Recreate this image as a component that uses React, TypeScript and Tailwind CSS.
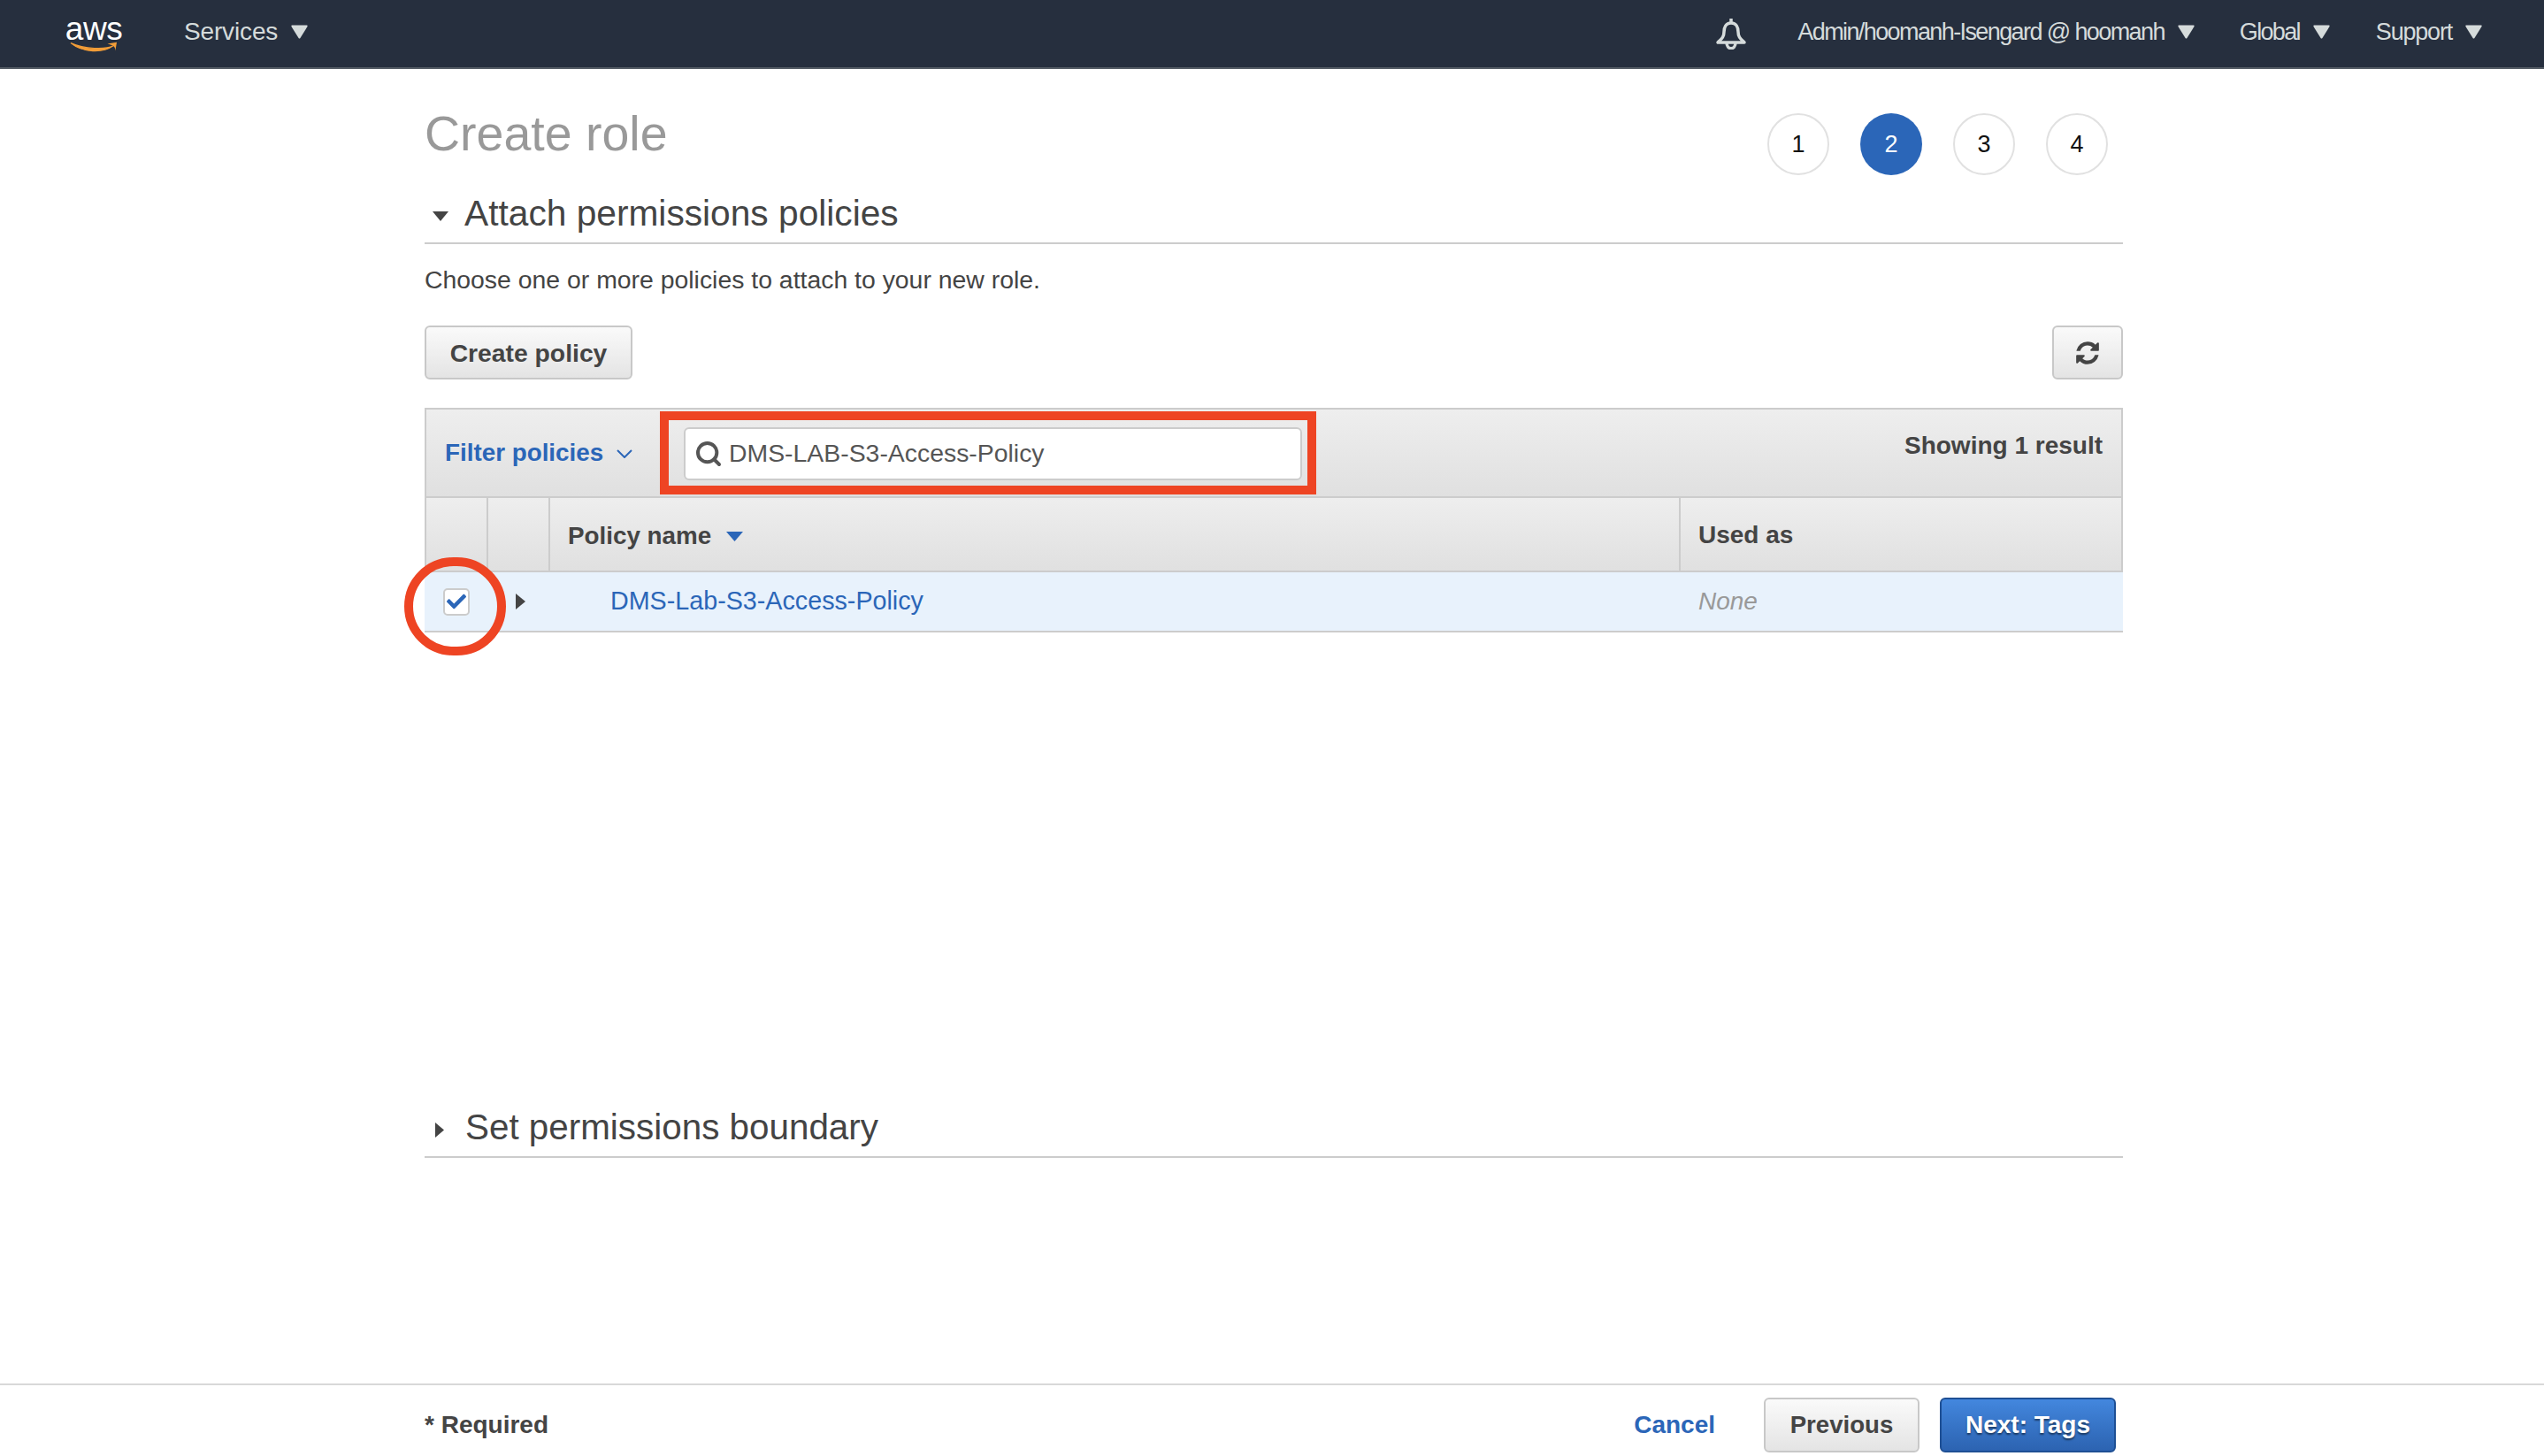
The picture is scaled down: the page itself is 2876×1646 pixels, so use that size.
import { FaCheck } from "react-icons/fa";
import { Search } from "lucide-react";

const Tri = ({ className }: { className: string }) => (
  <svg viewBox="0 0 20 16" preserveAspectRatio="none" className={className}>
    <path d="M1 0.5 H19 Q20 0.5 19.5 2 L11 15 Q10 16 9 15 L0.5 2 Q0 0.5 1 0.5 Z" fill="currentColor" />
  </svg>
);

const Down = ({ className }: { className: string }) => (
  <svg viewBox="0 0 20 12" preserveAspectRatio="none" className={className}>
    <path d="M0 0 H20 L10 12 Z" fill="currentColor" />
  </svg>
);

const Right = ({ className }: { className: string }) => (
  <svg viewBox="0 0 10 18" preserveAspectRatio="none" className={className}>
    <path d="M0 0 L10 9 L0 18 Z" fill="currentColor" />
  </svg>
);

const RefreshIcon = () => (
  <svg viewBox="0 0 1792 1792" className="w-[30px] h-[30px] text-[#444]">
    <path
      fill="currentColor"
      d="M1639 1056q0 5-1 7-64 268-268 434.5t-478 166.5q-146 0-282.5-55t-243.5-157l-129 129q-19 19-45 19t-45-19-19-45v-448q0-26 19-45t45-19h448q26 0 45 19t19 45-19 45l-137 137q71 66 161 102t187 36q134 0 250-65t186-179q11-17 53-117 8-23 30-23h192q13 0 22.5 9.5t9.5 22.5zm25-800v448q0 26-19 45t-45 19h-448q-26 0-45-19t-19-45 19-45l138-138q-148-137-349-137-134 0-250 65t-186 179q-11 17-53 117-8 23-30 23h-199q-13 0-22.5-9.5t-9.5-22.5v-7q65-268 270-434.5t480-166.5q146 0 284 55.5t245 156.5l130-129q19-19 45-19t45 19 19 45z"
    />
  </svg>
);

const NavItem = ({ label, className, textClass }: { label: string; className: string; textClass: string }) => (
  <div className={`flex items-center gap-[15px] ${className}`}>
    <span className={`text-[#d5dbdb] leading-none ${textClass}`}>{label}</span>
    <Tri className="w-[19px] h-[16px] text-[#d5dbdb]" />
  </div>
);

const Steps = () => (
  <div className="flex gap-[35px] mr-[17px]">
    {[1, 2, 3, 4].map((n) => (
      <div
        key={n}
        className={
          n === 2
            ? "w-[70px] h-[70px] rounded-full bg-[#2b66b8] text-white flex items-center justify-center text-[27px]"
            : "w-[70px] h-[70px] rounded-full border-2 border-[#e1e1e1] text-[#111] flex items-center justify-center text-[27px]"
        }
      >
        {n}
      </div>
    ))}
  </div>
);

const btn = "h-[61px] rounded-[6px] border-2 border-[#c8c8c8] bg-gradient-to-b from-[#fafafa] to-[#e4e4e4] text-[#444] font-bold flex items-center justify-center";

export default function App() {
  return (
    <div className="h-[1646px] w-[2876px] overflow-hidden bg-white flex flex-col font-['Liberation_Sans',Arial,sans-serif] text-[#444]">
      <header className="h-[78px] shrink-0 bg-[#262f3e] border-b-2 border-[#545b64] flex items-center">
        <div className="w-[73px]" />
        <div className="w-[66px] h-[44px] flex flex-col items-center">
          <span className="text-[37px] leading-[34px] tracking-[-0.5px] text-white">aws</span>
          <svg viewBox="0 0 66 16" className="w-[66px] h-[16px] -mt-[3px]">
            <path d="M1 2 C18 16 46 16 60 6 C50 11 20 11 1 2 Z" fill="#f29d38" stroke="#f29d38" strokeWidth="1.5" />
            <path d="M52 3 L65 1 L63 13 C63 8 62 5 52 3 Z" fill="#f29d38" />
          </svg>
        </div>
        <NavItem label="Services" className="ml-[69px] -mt-[4px]" textClass="text-[28px] tracking-[-0.15px]" />
        <div className="flex-1" />
        <svg viewBox="0 0 36 36" className="w-[36px] h-[36px] text-[#d5dbdb] -mt-[1px]" fill="none" stroke="currentColor" strokeWidth="3.5">
          <path d="M18 1 V6 M18 6 C12 6 10 11 10 16 C10 22 7 24 3 28 H33 C29 24 26 22 26 16 C26 11 24 6 18 6 Z" strokeLinejoin="round" />
          <path d="M13 28 C13 37 23 37 23 28" />
        </svg>
        <NavItem label="Admin/hoomanh-Isengard @ hoomanh" className="ml-[57px] -mt-[4px]" textClass="text-[27px] tracking-[-1.6px]" />
        <NavItem label="Global" className="ml-[51px] -mt-[4px]" textClass="text-[27px] tracking-[-1.67px]" />
        <NavItem label="Support" className="ml-[52px] mr-[70px] -mt-[4px]" textClass="text-[27px] tracking-[-1.2px]" />
      </header>

      <main className="flex-1 w-[1920px] ml-[480px]">
        <div className="flex justify-between pt-[50px] h-[120px]">
          <h1 className="text-[55.5px] leading-[54px] text-[#999] font-normal -mt-[4px]">Create role</h1>
          <Steps />
        </div>
        <div className="h-[78px] border-b-2 border-[#ccc] flex items-center pt-[11px]">
          <Down className="w-[18px] h-[11px] ml-[9px] mr-[18px] mt-[6px] text-[#444]" />
          <h2 className="text-[40.7px] leading-none font-normal">Attach permissions policies</h2>
        </div>
        <p className="text-[28.4px] leading-none mt-[26px] text-[#444]">Choose one or more policies to attach to your new role.</p>
        <div className="flex justify-between mt-[38px]">
          <button className={`${btn} w-[235px] text-[28.3px] pt-[1px]`}>Create policy</button>
          <button className={`${btn} w-[80px]`}>
            <RefreshIcon />
          </button>
        </div>

        <div className="relative mt-[32px]">
          <div className="h-[102px] border-2 border-[#ccc] bg-gradient-to-b from-[#eeeeee] to-[#e0e0e0] flex relative">
            <div className="flex items-center gap-[15px] pl-[21px] h-[96px]">
              <span className="text-[27.8px] font-bold text-[#2b66b8]">Filter policies</span>
              <svg viewBox="0 0 18 10" className="w-[18px] h-[10px] mt-[4px] text-[#2b66b8]" fill="none" stroke="currentColor" strokeWidth="2">
                <path d="M1 1 L9 9 L17 1" />
              </svg>
            </div>
            <div className="absolute left-[291px] top-[20px] w-[699px] h-[60px] rounded-[6px] border-2 border-[#ccc] bg-white flex items-center pl-[10px] gap-[7px]">
              <Search className="w-[32px] h-[32px] text-[#555]" strokeWidth={3} />
              <span className="text-[28.4px] text-[#555] leading-none -mt-[2px]">DMS-LAB-S3-Access-Policy</span>
            </div>
            <div className="absolute left-[264px] top-[2px] w-[742px] h-[94px] border-[10px] border-[#ee4423]" />
            <div className="ml-auto pr-[21px] pt-[27px] text-[28px] font-bold leading-none">Showing 1 result</div>
          </div>
          <div className="grid grid-cols-[70px_70px_1278px_1fr] h-[84px] bg-gradient-to-b from-[#eeeeee] to-[#e0e0e0] border-x-2 border-b-2 border-[#ccc]">
            <div className="border-r-2 border-[#ccc]" />
            <div className="border-r-2 border-[#ccc]" />
            <div className="border-r-2 border-[#ccc] flex items-center pl-[20px] gap-[17px] pt-[2px]">
              <span className="text-[27.8px] font-bold">Policy name</span>
              <Down className="w-[19px] h-[11px] text-[#2b66b8] mt-[3px]" />
            </div>
            <div className="flex items-center pl-[20px] text-[28px] font-bold pt-[2px]">Used as</div>
          </div>
          <div className="grid grid-cols-[71px_70px_1278px_1fr] h-[68px] bg-[#e8f2fc] border-b-2 border-[#ccc] relative">
            <div className="flex items-center justify-center">
              <div className="w-[30px] h-[31px] rounded-[5px] border-2 border-[#ccc] bg-white flex items-center justify-center">
                <FaCheck className="w-[24px] h-[22px] text-[#2b66b8]" />
              </div>
            </div>
            <div className="flex items-center pl-[32px]">
              <Right className="w-[11px] h-[18px] text-[#444]" />
            </div>
            <div className="flex items-center pl-[69px] pb-[2px] text-[28.7px] text-[#2b66b8]">DMS-Lab-S3-Access-Policy</div>
            <div className="flex items-center pl-[21px] text-[28px] italic text-[#999]">None</div>
          </div>
          <div className="absolute -left-[23px] top-[169px] w-[115px] h-[111px] rounded-full border-[10px] border-[#ee4423]" />
        </div>

        <div className="h-[78px] mt-[516px] border-b-2 border-[#ccc] flex items-center pt-[10px]">
          <Right className="w-[10px] h-[17px] ml-[12px] mr-[24px] mt-[6px] text-[#444]" />
          <h2 className="text-[40.4px] leading-none font-normal">Set permissions boundary</h2>
        </div>
      </main>

      <footer className="h-[82px] shrink-0 border-t-2 border-[#d8d8d8] flex items-center pl-[480px] pr-[484px] pt-[10px]">
        <span className="text-[28px] font-bold">* Required</span>
        <div className="flex-1" />
        <span className="text-[28px] font-bold text-[#2b66b8] mr-[55px]">Cancel</span>
        <button className={`${btn} w-[176px] h-[62px] text-[27.6px]`}>Previous</button>
        <button className="ml-[23px] w-[199px] h-[62px] rounded-[6px] border-2 border-[#1e4f94] bg-gradient-to-b from-[#4387de] to-[#2c63b1] text-white text-[28px] font-bold [text-shadow:0_2px_2px_rgba(0,0,0,0.5)]">
          Next: Tags
        </button>
      </footer>
    </div>
  );
}
